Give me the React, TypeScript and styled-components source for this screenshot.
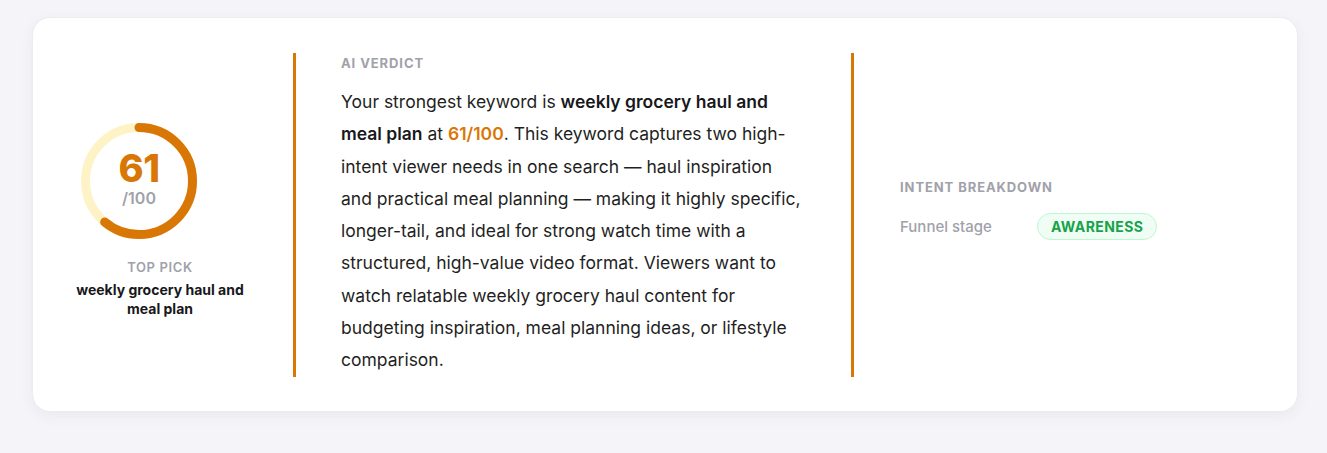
import { FC } from "react";
import { styled, createGlobalStyle } from "styled-components";

const GlobalStyle = createGlobalStyle`
  * { box-sizing: border-box; }
  body {
    margin: 0;
    background: #f5f5f9;
    font-family: Inter, "Noto Sans", "Liberation Sans", sans-serif;
    color: #1c1c22;
  }
`;

const ORANGE = "#d97706";

interface RingProps {
  score: number;
  size?: number;
  stroke?: number;
}

const ScoreRing: FC<RingProps> = ({ score, size = 116, stroke = 9 }) => {
  const r = (size - stroke) / 2;
  const c = 2 * Math.PI * r;
  const dash = (score / 100) * c;
  return (
    <RingWrap>
      <svg width={size} height={size} viewBox={`0 0 ${size} ${size}`}>
        <circle cx={size / 2} cy={size / 2} r={r} fill="none" stroke="#fef3c7" strokeWidth={stroke} />
        <circle
          cx={size / 2}
          cy={size / 2}
          r={r}
          fill="none"
          stroke={ORANGE}
          strokeWidth={stroke}
          strokeLinecap="round"
          strokeDasharray={`${dash} ${c}`}
          transform={`rotate(-90 ${size / 2} ${size / 2})`}
        />
      </svg>
      <RingCenter>
        <ScoreNum>{score}</ScoreNum>
        <ScoreMax>/100</ScoreMax>
      </RingCenter>
    </RingWrap>
  );
};

export default function App() {
  return (
    <>
      <GlobalStyle />
      <Page>
        <Card>
          <PickColumn>
            <ScoreRing score={61} />
            <PickLabel>TOP PICK</PickLabel>
            <PickKeyword>weekly grocery haul and meal plan</PickKeyword>
          </PickColumn>

          <VerdictColumn>
            <SectionLabel>AI VERDICT</SectionLabel>
            <Verdict>
              Your strongest keyword is <strong>weekly grocery haul and meal plan</strong> at{" "}
              <Highlight>61/100</Highlight>. This keyword captures two high-intent viewer needs in one
              search — haul inspiration and practical meal planning — making it highly specific,
              longer-tail, and ideal for strong watch time with a structured, high-value video format.
              Viewers want to watch relatable weekly grocery haul content for budgeting inspiration,
              meal planning ideas, or lifestyle comparison.
            </Verdict>
          </VerdictColumn>

          <IntentColumn>
            <SectionLabel $gap={16}>INTENT BREAKDOWN</SectionLabel>
            <IntentRow>
              <IntentKey>Funnel stage</IntentKey>
              <Pill>AWARENESS</Pill>
            </IntentRow>
          </IntentColumn>
        </Card>
      </Page>
    </>
  );
}

const Page = styled.div`
  padding: 17px 29px 40px 32px;
`;

const Card = styled.div`
  display: grid;
  grid-template-columns: 218px 558px 1fr;
  align-items: center;
  background: #fff;
  border: 1px solid #ececf1;
  border-radius: 18px;
  padding: 35px 47px 34px 42px;
  box-shadow: 0 4px 14px rgba(30, 30, 60, 0.06);
`;

const PickColumn = styled.div`
  width: 170px;
  display: flex;
  flex-direction: column;
  align-items: center;
  padding-top: 11px;
`;

const RingWrap = styled.div`
  position: relative;
  width: 116px;
  height: 116px;
  align-self: flex-start;
  margin-left: 6px;

  svg {
    display: block;
  }
`;

const RingCenter = styled.div`
  position: absolute;
  inset: 0;
  display: flex;
  flex-direction: column;
  align-items: center;
  justify-content: center;
`;

const ScoreNum = styled.div`
  font-size: 38px;
  font-weight: 800;
  color: ${ORANGE};
  line-height: 38px;
  letter-spacing: -0.5px;
  margin-top: -3px;
`;

const ScoreMax = styled.div`
  font-size: 16px;
  font-weight: 600;
  color: #a1a1aa;
  line-height: 22px;
`;

const PickLabel = styled.div`
  margin-top: 20px;
  font-size: 13px;
  font-weight: 600;
  letter-spacing: 0.05em;
  color: #a1a1aa;
  line-height: 16px;
`;

const PickKeyword = styled.div`
  margin-top: 5px;
  font-size: 14px;
  font-weight: 700;
  line-height: 19px;
  text-align: center;
  color: #18181b;
`;

const VerdictColumn = styled.div`
  border-left: 3px solid ${ORANGE};
  padding: 0 46px 0 45px;
  align-self: stretch;
`;

const SectionLabel = styled.div<{ $gap?: number }>`
  font-size: 13px;
  font-weight: 700;
  letter-spacing: 0.07em;
  color: #a1a1aa;
  line-height: 20px;
  margin-bottom: ${(p) => p.$gap ?? 13}px;
`;

const Verdict = styled.p`
  margin: 0;
  font-size: 17.5px;
  line-height: 32.3px;
  color: #1f1f24;

  strong {
    font-weight: 600;
    color: #18181b;
  }
`;

const Highlight = styled.span`
  color: ${ORANGE};
  font-weight: 600;
`;

const IntentColumn = styled.div`
  border-left: 3px solid ${ORANGE};
  padding: 0 0 13px 46px;
  align-self: stretch;
  display: flex;
  flex-direction: column;
  justify-content: center;
`;

const IntentRow = styled.div`
  display: flex;
  align-items: center;
`;

const IntentKey = styled.div`
  width: 137px;
  font-size: 15px;
  font-weight: 500;
  color: #a1a1aa;
`;

const Pill = styled.span`
  display: inline-flex;
  align-items: center;
  height: 27px;
  padding: 0 13px;
  border-radius: 999px;
  background: #f0fdf4;
  border: 1px solid #bbf7d0;
  color: #16a34a;
  font-size: 14px;
  font-weight: 700;
  letter-spacing: 0.03em;
`;
